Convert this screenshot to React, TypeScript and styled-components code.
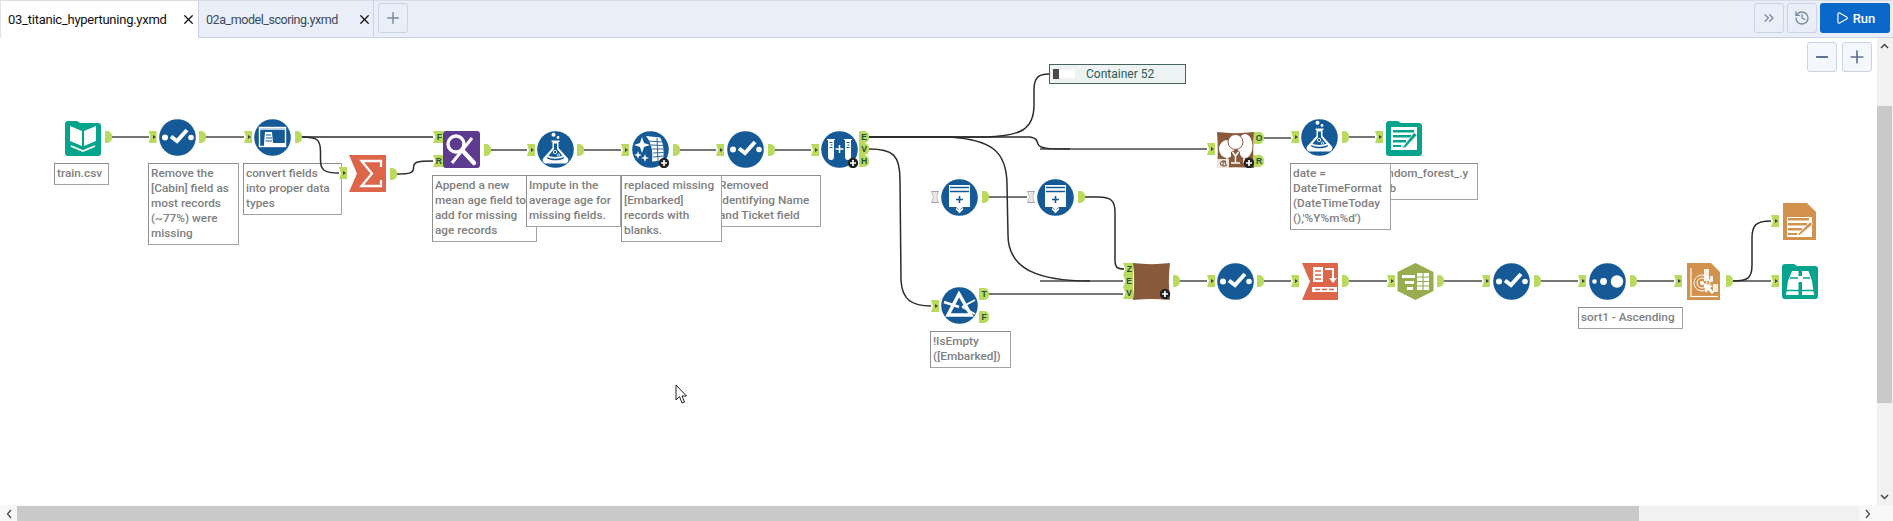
import React from "react";
import styled, { createGlobalStyle } from "styled-components";
import { ChevronsRight, History, Minus, Play, Plus, X } from "lucide-react";

const TOP = 38;
const BLUE = "#155a96";
const TEAL = "#06a38d";
const RED = "#dc654a";
const ORANGE = "#d3914e";
const BROWN = "#8a5a3d";

const Global = createGlobalStyle`
  html, body { margin: 0; padding: 0; background: #fff; overflow: hidden; }
  * { box-sizing: border-box; }
`;

const Page = styled.div`
  width: 1893px;
  height: 521px;
  display: grid;
  grid-template-rows: 38px 1fr 16px;
  grid-template-columns: 1fr 16px;
  font-family: Roboto, "Liberation Sans", sans-serif;
`;

const TabBar = styled.div`
  grid-column: 1 / 3;
  display: flex;
  align-items: stretch;
  background: #e9eef8;
  border-top: 1px solid #d9dde3;
  border-bottom: 1px solid #c9d3e5;
`;

const Tab = styled.div<{ $active?: boolean; $w: number }>`
  width: ${(p) => p.$w}px;
  display: flex;
  align-items: center;
  justify-content: space-between;
  padding: 0 ${(p) => (p.$active ? "2px" : "1px")} 0 7px;
  font-size: ${(p) => (p.$active ? "13px" : "12.5px")};
  letter-spacing: ${(p) => (p.$active ? "-0.25px" : "-0.45px")};
  margin-bottom: ${(p) => (p.$active ? "-1px" : "0")};
  color: ${(p) => (p.$active ? "#111" : "#3a4a60")};
  background: ${(p) => (p.$active ? "#fff" : "#e9eef8")};
  border-left: ${(p) => (p.$active ? "1px solid #dfe3e8" : "none")};
  border-right: 1px solid #c9d3e5;
`;

const Close = styled(X)`
  color: #111;
  flex: none;
`;

const IconButton = styled.div<{ $ml?: number }>`
  width: 30px;
  height: 30px;
  margin-left: ${(p) => p.$ml ?? 3}px;
  margin-top: 2px;
  display: flex;
  align-items: center;
  justify-content: center;
  color: #7b8aa0;
  border: 1px solid #c9d3e5;
  border-radius: 3px;
  background: #e9eef8;
`;

const Spacer = styled.div`
  flex: 1;
`;

const RunButton = styled.div`
  width: 70px;
  height: 30px;
  margin: 2px 3px 0 3px;
  border-radius: 3px;
  display: flex;
  align-items: center;
  justify-content: center;
  gap: 4px;
  color: #fff;
  font-size: 13px;
  font-weight: 500;
  background: #0b68cb;
`;

const Canvas = styled.div`
  position: relative;
  overflow: hidden;
  background: #fff;
`;

const ZoomBar = styled.div`
  position: absolute;
  top: 4px;
  right: 5px;
  display: flex;
  gap: 5px;
  z-index: 5;
`;

const ZoomButton = styled.div`
  width: 30px;
  height: 30px;
  display: flex;
  align-items: center;
  justify-content: center;
  color: #5d7190;
  background: #f4f7fc;
  border: 1px solid #c9d3e5;
  border-radius: 3px;
`;

const VScroll = styled.div`
  display: flex;
  flex-direction: column;
  background: #f1f1f1;
  padding: 0 1px 0 0;
`;

const ScrollArrow = styled.div`
  height: 16px;
  display: flex;
  align-items: center;
  justify-content: center;
  color: #505050;
  flex: none;
`;

const VThumbGap = styled.div`
  height: 52px;
  flex: none;
`;

const VThumb = styled.div`
  height: 297px;
  background: #c9c9c9;
  flex: none;
`;

const HScroll = styled.div`
  grid-column: 1 / 3;
  display: flex;
  background: #f1f1f1;
  border-top: 1px solid #f8f8f8;
`;

const HArrow = styled.div`
  width: 17px;
  display: flex;
  align-items: center;
  justify-content: center;
  color: #505050;
  flex: none;
  background: #f8f8f8;
`;

const HThumb = styled.div`
  width: 1622px;
  background: #c9c9c9;
  flex: none;
`;

const HFill = styled.div`
  flex: 1;
`;

const Note = styled.div<{ $x: number; $y: number; $w: number; $h: number }>`
  position: absolute;
  left: ${(p) => p.$x}px;
  top: ${(p) => p.$y - TOP}px;
  width: ${(p) => p.$w}px;
  height: ${(p) => p.$h}px;
  padding: 2px 0 0 2px;
  overflow: hidden;
  white-space: nowrap;
  background: #fff;
  border: 1px solid #8e8e8e;
  border-right-color: #a2a2a2;
  border-bottom-color: #a2a2a2;
  color: #808080;
  font-family: Roboto, "Liberation Sans", sans-serif;
  font-size: 11.8px;
  font-weight: 500;
  line-height: 15px;
`;

const WireLayer = styled.svg`
  position: absolute;
  left: 0;
  top: 0;
  pointer-events: none;
`;

const Tool = styled.svg<{ $x: number; $y: number; $w?: number }>`
  position: absolute;
  left: ${(p) => p.$x}px;
  top: ${(p) => p.$y - TOP}px;
  width: ${(p) => p.$w ?? 37}px;
  height: 37px;
`;

const InAnchor = styled.div<{ $x: number; $y: number; $label?: string; $off?: boolean }>`
  position: absolute;
  left: ${(p) => p.$x}px;
  top: ${(p) => p.$y - TOP - 6}px;
  width: ${(p) => (p.$label ? 10 : 8)}px;
  height: 12px;
  background: ${(p) => (p.$off ? "#a5a5a5" : "#b9da5e")};
  clip-path: ${(p) =>
    p.$off
      ? "polygon(0 0, 100% 0, 75% 50%, 100% 100%, 0 100%, 25% 50%)"
      : "polygon(0 0, 100% 0, 100% 100%, 0 100%, 25% 50%)"};
  display: flex;
  align-items: center;
  justify-content: flex-end;
  padding-right: 1px;
  font: 700 8.5px/12px "Liberation Sans", sans-serif;
  color: #23513f;
  &::before {
    content: "";
    display: ${(p) => (p.$off ? "block" : "none")};
    position: absolute;
    inset: 1px;
    background: #e6e6e6;
    clip-path: polygon(0 0, 100% 0, 75% 50%, 100% 100%, 0 100%, 25% 50%);
  }
  &::after {
    content: "";
    display: ${(p) => (p.$label || p.$off ? "none" : "block")};
    border-left: 3px solid #444;
    border-top: 2px solid transparent;
    border-bottom: 2px solid transparent;
  }
`;

const OutAnchor = styled.div<{ $x: number; $y: number; $label?: string }>`
  position: absolute;
  left: ${(p) => p.$x}px;
  top: ${(p) => p.$y - TOP - 6}px;
  width: ${(p) => (p.$label ? 10 : 7)}px;
  height: 12px;
  background: #b9da5e;
  border-radius: 0 5px 5px 0;
  text-align: center;
  font: 700 8.5px/12px "Liberation Sans", sans-serif;
  color: #23513f;
`;

const ContainerBox = styled.div`
  position: absolute;
  left: 1049px;
  top: ${64 - TOP}px;
  width: 137px;
  height: 20px;
  display: flex;
  align-items: center;
  padding-left: 3px;
  background: #edf3f3;
  border: 1px solid #45645f;
  color: #2f5a55;
  font-size: 12px;
`;

const ContainerGrip = styled.div`
  width: 6px;
  height: 10px;
  background: #4a4a4a;
  flex: none;
`;

const ContainerTrack = styled.div`
  width: 16px;
  height: 8px;
  margin-right: 11px;
  background: #fff;
  flex: none;
`;

const Pointer = styled.svg`
  position: absolute;
  left: 675px;
  top: ${384 - TOP}px;
  width: 13px;
  height: 20px;
`;

const Circle = () => <circle cx="18.5" cy="18.5" r="18.3" fill={BLUE} />;

const Badge = ({ cx, cy }: { cx: number; cy: number }) => (
  <g>
    <circle cx={cx} cy={cy} r="5.2" fill="#222" />
    <path d={`M${cx - 3} ${cy}h6M${cx} ${cy - 3}v6`} stroke="#fff" strokeWidth="1.7" />
  </g>
);

const Folder = () => (
  <path
    d="M0 4a3 3 0 0 1 3-3h9l3 2h18a3 3 0 0 1 3 3v27a3 3 0 0 1-3 3H3a3 3 0 0 1-3-3z"
    fill={TEAL}
  />
);

const Icons: Record<string, React.ReactNode> = {
  input: (
    <>
      <Folder />
      <path d="M5 6l12 5v15L5 21zM19 11l12-5v15l-12 5z" fill="#fff" />
      <path d="M6 26l12 5 12-5" fill="none" stroke="#fff" strokeWidth="1.8" />
    </>
  ),
  select: (
    <>
      <Circle />
      <circle cx="6" cy="18.5" r="3" fill="#fff" />
      <path d="M12 17.5l6 4.5 10-11" fill="none" stroke="#fff" strokeWidth="4" />
      <circle cx="32" cy="18.5" r="2.8" fill="#fff" />
    </>
  ),
  autofield: (
    <>
      <Circle />
      <rect x="5.5" y="8.5" width="26" height="19" fill="none" stroke="#fff" strokeWidth="1.4" />
      <path d="M6 10h25" stroke="#fff" strokeWidth="1.4" />
      <path d="M10 24h21v4H10z" fill="#fff" />
      <path d="M11 13h7l1 11h-9z" fill="#fff" />
      <path d="M12 16h5M12 19h6M11.5 22h6.5" stroke={BLUE} strokeWidth="1" />
    </>
  ),
  summarize: (
    <>
      <path d="M0 0H37V37H0L8 18.5z" fill={RED} />
      <path d="M32 12V6H12.5L23 18.5 12.5 31H32V25" fill="none" stroke="#fff" strokeWidth="2.3" />
    </>
  ),
  append: (
    <>
      <rect width="37" height="37" rx="3" fill="#5d3c8f" />
      <circle cx="13" cy="13" r="8" fill="none" stroke="#fff" strokeWidth="3.4" />
      <path d="M19 19l12 13" stroke="#fff" strokeWidth="4.4" strokeLinecap="round" />
      <path d="M29 7L9 32" stroke="#fff" strokeWidth="3" />
    </>
  ),
  flask: (
    <>
      <Circle />
      <circle cx="16.5" cy="3.8" r="2" fill="#fff" />
      <circle cx="21" cy="6.5" r="1.4" fill="#fff" />
      <path d="M14.5 9.5h8v1.5h-1v6L31 27.5c1.2 2.5-.6 5-3 5H9c-2.4 0-4.2-2.5-3-5L15.5 17v-6h-1z" fill="#fff" />
      <path d="M17 12.5h3V18l7.3 9c-2 1.6-5 2.3-8.8 2.3s-6.8-.7-8.8-2.3L17 18z" fill={BLUE} />
      <circle cx="18" cy="21" r="1.7" fill="none" stroke="#fff" strokeWidth=".9" />
      <circle cx="21.5" cy="24" r="1.2" fill="none" stroke="#fff" strokeWidth=".8" />
      <path d="M10 25c4 2.5 12 2.5 17 0" fill="none" stroke="#fff" strokeWidth="1.6" />
    </>
  ),
  multi: (
    <>
      <Circle />
      <path d="M10 6l2 6 6 2-6 2-2 6-2-6-6-2 6-2z" fill="#fff" />
      <path d="M6 20l1 3 3 1-3 1-1 3-1-3-3-1 3-1zM13 23l1 3 3 1-3 1-1 3-1-3-3-1 3-1z" fill="#fff" />
      <path d="M14 5l14 1.500c3 4 4.500 13 3 23l-11 1c1-9 0-18-6-25.500z" fill="#fff" />
      <path d="M16 10l14 1M19 14l12 .5M20 18l11.500 0M21 22l10.500-.5M21 26l10-1M25 7l1 23" stroke={BLUE} strokeWidth=".9" />
    </>
  ),
  split: (
    <>
      <Circle />
      <path d="M6 8h8v1h-1v17a3 3 0 0 1-6 0V9H6zM23 8h8v1h-1v17a3 3 0 0 1-6 0V9h-1z" fill="#fff" />
      <path d="M8.500 11.500h3M9.500 14h2M8.500 16.500h3M25.500 11.500h3M26.500 14h2M25.500 16.500h3" stroke={BLUE} strokeWidth="1" />
      <path d="M18.500 14v8M14.500 18h8" stroke="#fff" strokeWidth="1.500" />
    </>
  ),
  forest: (
    <>
      <path d="M0 1c12 1.500 25 1.500 37 0-1 12-1 24 0 36-12-1-25-1-37 0 1-12 1-24 0-36z" fill={BROWN} />
      <ellipse cx="10" cy="18" rx="8" ry="9" fill="#fff" />
      <ellipse cx="28" cy="15" rx="7.500" ry="12" fill="#fff" />
      <ellipse cx="18.500" cy="11" rx="7.500" ry="7.500" fill="#fff" stroke={BROWN} strokeWidth="1" />
      <path d="M14 21c2-1 3.500-1.500 4.500-3.500 1 2 3 2.500 4.500 3.500l.5 9H14z" fill={BROWN} />
      <path d="M18.500 31v-6l-3-4M18.500 25l3-4" fill="none" stroke="#fff" strokeWidth="1.500" />
      <path d="M10 32v-6M14 32h9M27 32v-6" stroke="#fff" strokeWidth="1.500" />
      <path d="M0 28h12v9H0z" fill="#efe6e0" />
      <path d="M9 30.500a3.500 2.500 0 1 0 0 4M6 31v4M6 31h2l1.500 4" fill="none" stroke="#7d6050" strokeWidth="1.100" />
    </>
  ),
  formula: (
    <>
      <Circle />
      <path d="M8 6h21v22l-7 0-3.500 3-3.500-3H8z" fill="#fff" />
      <path d="M9 8.500h19M9 12.500h19" stroke={BLUE} strokeWidth="1.500" />
      <path d="M18.500 17v7M15 20.500h7" stroke={BLUE} strokeWidth="1.600" />
      <path d="M18.500 26v6M15 29.500l3.500 3.500 3.500-3.500" fill="none" stroke="#fff" strokeWidth="1.600" />
    </>
  ),
  filter: (
    <>
      <Circle />
      <path d="M18 7L7 28h23z" fill="none" stroke="#fff" strokeWidth="3.400" />
      <path d="M3 15l15 5" stroke="#fff" strokeWidth="2.400" />
      <path d="M21 20l13-7M21 20l13 7" stroke="#fff" strokeWidth="1.800" />
    </>
  ),
  union: (
    <>
      <path d="M0 0C12 1.500 25 1.500 37 0 35.500 12 35.500 25 37 37 25 35.500 12 35.500 0 37 1.500 25 1.500 12 0 0z" fill={BROWN} />
    </>
  ),
  red: (
    <>
      <path d="M0 0H36V37H0L8 18.500z" fill={RED} />
      <path d="M11 4h10v15H11z" fill="#fff" />
      <path d="M13 8h6M13 12h6M13 16h6" stroke={RED} strokeWidth="1.600" />
      <path d="M23 6h8v10" fill="none" stroke="#fff" strokeWidth="2" />
      <path d="M27 15h8l-4 5z" fill="#fff" />
      <path d="M10 24h25v5H10z" fill="#fff" />
      <path d="M13 26.500h5M20 26.500h5M27 26.500h5" stroke={RED} strokeWidth="1.600" />
    </>
  ),
  hex: (
    <>
      <path d="M18.500 0L36.500 9v19L18.500 37 .5 28V9z" fill="#98ac50" />
      <path d="M5 12h13v3H5zM8 18h9v3H8zM10 24h6v3h-6z" fill="#fff" />
      <path d="M20 10h12v17H20z" fill="#fff" />
      <path d="M20 14h12M20 18.500h12M20 23h12M26 10v17" stroke="#98ac50" strokeWidth="1.200" />
    </>
  ),
  sort: (
    <>
      <Circle />
      <circle cx="5.500" cy="18.500" r="2.300" fill="#fff" />
      <circle cx="14.500" cy="18.500" r="3.400" fill="#fff" />
      <circle cx="28" cy="18.500" r="6.200" fill="#fff" />
    </>
  ),
  report: (
    <>
      <path d="M0 0H24L33 9V37H0z" fill={ORANGE} />
      <path d="M4 33.500h27" stroke="#fff" strokeWidth="1.200" />
      <path d="M4 5v29" stroke="#fff" strokeWidth="1.200" />
      <path d="M17 6h5v12h-5zM23 13h3v6h-3zM26 21h5v8h-5z" fill="#fff" opacity=".85" />
      <circle cx="15" cy="20" r="8" fill="none" stroke="#fff" strokeWidth="1" />
      <circle cx="15" cy="20" r="5" fill="none" stroke="#fff" strokeWidth="1" />
      <circle cx="15" cy="20" r="2" fill="#fff" />
      <path d="M16 20l3 10 2-3 4 4 2-2-4-4 3-2z" fill="#fff" />
    </>
  ),
  note: (
    <>
      <path d="M0 0H24L33 9V37H0z" fill={ORANGE} />
      <path d="M4 14h25v20H4z" fill="#fff" />
      <path d="M5 15h21v2.500H5zM5 20h19v2.500H5zM5 25h14v2.500H5zM5 30h9v2H5z" fill={ORANGE} />
      <path d="M14 32l3 0 13-11-3-2z" fill={ORANGE} stroke="#fff" strokeWidth=".6" />
    </>
  ),
  output: (
    <>
      <Folder />
      <path d="M5 7h26v23H5z" fill="#fff" />
      <path d="M7 10h21v2.500H7zM7 15h18v2.500H7zM7 20h13v2.500H7zM7 25h8v2H7z" fill={TEAL} />
      <path d="M16 28l3.500-.5L31 15l-3-2.500z" fill={TEAL} stroke="#fff" strokeWidth=".6" />
    </>
  ),
  browse: (
    <>
      <Folder />
      <path d="M10 8h6.500v24H4l2-14zM20 8h6.500l3.500 10 2 14H20z" fill="#fff" />
      <path d="M15 13h6v6h-6z" fill="#fff" />
      <path d="M4 27.500h13M20 27.500h12M8 15h8M21 15h7" stroke={TEAL} strokeWidth="1.300" />
    </>
  ),
};

const tools: { k: string; x: number; y: number; w?: number; badge?: [number, number] }[] = [
  { k: "input", x: 65, y: 120 },
  { k: "select", x: 159, y: 119 },
  { k: "autofield", x: 254, y: 119 },
  { k: "summarize", x: 349, y: 155 },
  { k: "append", x: 443, y: 131 },
  { k: "flask", x: 536.5, y: 131 },
  { k: "multi", x: 632, y: 131, w: 40, badge: [32, 32] },
  { k: "select", x: 726.5, y: 131 },
  { k: "split", x: 821, y: 131, w: 40, badge: [32, 32] },
  { k: "forest", x: 1217, y: 131, w: 43, badge: [32, 32] },
  { k: "flask", x: 1301, y: 119 },
  { k: "output", x: 1386, y: 120 },
  { k: "formula", x: 941, y: 179 },
  { k: "formula", x: 1037, y: 179 },
  { k: "filter", x: 941, y: 287 },
  { k: "union", x: 1133, y: 263, w: 43, badge: [32, 31] },
  { k: "select", x: 1217, y: 263 },
  { k: "red", x: 1302, y: 263 },
  { k: "hex", x: 1397, y: 263 },
  { k: "select", x: 1493, y: 263 },
  { k: "sort", x: 1589, y: 263 },
  { k: "report", x: 1687, y: 263 },
  { k: "note", x: 1783, y: 203 },
  { k: "browse", x: 1782, y: 263 },
];

const inputs: { x: number; y: number; label?: string; off?: boolean }[] = [
  { x: 148.5, y: 137 }, { x: 244, y: 137 }, { x: 339, y: 173 },
  { x: 433, y: 137, label: "F" }, { x: 433, y: 161, label: "R" },
  { x: 527, y: 150 }, { x: 621, y: 150 }, { x: 716, y: 150 }, { x: 811, y: 150 },
  { x: 1207, y: 149 }, { x: 1291, y: 137 }, { x: 1375, y: 137 },
  { x: 931, y: 197, off: true }, { x: 1027, y: 197, off: true }, { x: 931, y: 306 },
  { x: 1123, y: 269, label: "Z" }, { x: 1123, y: 281, label: "E" }, { x: 1123, y: 293, label: "V" },
  { x: 1207, y: 281 }, { x: 1291, y: 281 }, { x: 1387, y: 281 }, { x: 1482, y: 281 },
  { x: 1578, y: 281 }, { x: 1674, y: 281 }, { x: 1771, y: 221 }, { x: 1771, y: 281 },
];

const outputs: { x: number; y: number; label?: string }[] = [
  { x: 105, y: 137 }, { x: 199, y: 137 }, { x: 295, y: 137 }, { x: 390, y: 174 },
  { x: 484, y: 150 }, { x: 577, y: 150 }, { x: 673, y: 150 }, { x: 768, y: 150 },
  { x: 859, y: 137, label: "E" }, { x: 859, y: 149, label: "V" }, { x: 859, y: 161, label: "H" },
  { x: 1254, y: 138, label: "O" }, { x: 1254, y: 161, label: "R" },
  { x: 1342, y: 137 }, { x: 982, y: 197 }, { x: 1078, y: 197 },
  { x: 979, y: 294, label: "T" }, { x: 979, y: 317, label: "F" },
  { x: 1173, y: 281 }, { x: 1257, y: 281 }, { x: 1342, y: 281 }, { x: 1437, y: 281 },
  { x: 1534, y: 281 }, { x: 1630, y: 281 }, { x: 1726, y: 281 },
];

const notes: { x: number; y: number; w: number; h: number; t: string[] }[] = [
  { x: 54, y: 163, w: 55, h: 22, t: ["train.csv"] },
  { x: 148, y: 163, w: 91, h: 82, t: ["Remove the", "[Cabin] field as", "most records", "(~77%) were", "missing"] },
  { x: 243, y: 163, w: 99, h: 52, t: ["convert fields", "into proper data", "types"] },
  { x: 432, y: 175, w: 105, h: 67, t: ["Append a new", "mean age field to", "add for missing", "age records"] },
  { x: 526, y: 175, w: 95, h: 52, t: ["Impute in the", "average age for", "missing fields."] },
  { x: 716, y: 175, w: 105, h: 52, t: ["Removed", "Identifying Name", "and Ticket field"] },
  { x: 621, y: 175, w: 101, h: 67, t: ["replaced missing", "[Embarked]", "records with", "blanks."] },
  { x: 1374, y: 163, w: 104, h: 37, t: ["random_forest_.y", "xdb"] },
  { x: 1290, y: 163, w: 101, h: 67, t: ["date =", "DateTimeFormat", "(DateTimeToday", "(),'%Y%m%d')"] },
  { x: 930, y: 331, w: 81, h: 37, t: ["!IsEmpty", "([Embarked])"] },
  { x: 1578, y: 307, w: 105, h: 22, t: ["sort1 - Ascending"] },
];

const gray = [
  "M112 137H149", "M206 137H244", "M491 150H527", "M584 150H621", "M680 150H716", "M775 150H811",
  "M1040 149H1207", "M989 197H1027", "M989 294H1123", "M1040 281H1123",
  "M1180 281H1207", "M1264 281H1291", "M1349 281H1387", "M1444 281H1482",
  "M1541 281H1578", "M1637 281H1674", "M1733 281H1771", "M1349 137H1375", "M1264 138H1291",
];

const dark = [
  "M302 137H433",
  "M302 137C318 137 320.500 140 320.500 152L320.500 160C320.500 170 324 173 339 173",
  "M397 174C410 174 413.500 173 413.500 168C413.500 162 416 161 433 161",
  "M869 137H985C1020 136 1034 130 1034 105L1034 90C1034 78 1038 74 1049 74",
  "M869 137H1030C1036 138 1037 140 1038 144C1040 149 1050 149 1070 149",
  "M869 137H950C990 140 1007 150 1007 185L1008 235C1008 270 1040 281 1090 281",
  "M869 149C893 149 900 155 900 180L901 280C902 300 912 306 931 306",
  "M1085 197H1098C1110 197 1115 200 1115 212L1115 260C1115 267 1117 269 1124 269",
  "M1733 281C1748 281 1752 278 1752 265L1752 238C1752 225 1756 221 1771 221",
];

export default function App() {
  return (
    <Page>
      <Global />
      <TabBar>
        <Tab $active $w={199}>
          03_titanic_hypertuning.yxmd
          <Close size={15} strokeWidth={2} />
        </Tab>
        <Tab $w={175}>
          02a_model_scoring.yxmd
          <Close size={15} strokeWidth={2} />
        </Tab>
        <IconButton $ml={4}>
          <Plus size={18} />
        </IconButton>
        <Spacer />
        <IconButton>
          <ChevronsRight size={16} />
        </IconButton>
        <IconButton>
          <History size={16} />
        </IconButton>
        <RunButton>
          <Play size={14} />
          Run
        </RunButton>
      </TabBar>
      <Canvas>
        {notes.map((n) => (
          <Note key={n.t[0]} $x={n.x} $y={n.y} $w={n.w} $h={n.h}>
            {n.t.map((l) => (
              <div key={l}>{l}</div>
            ))}
          </Note>
        ))}
        <ContainerBox>
          <ContainerGrip />
          <ContainerTrack />
          <span>Container 52</span>
        </ContainerBox>
        <WireLayer width="1877" height="467" viewBox={`0 ${TOP} 1877 467`}>
          {gray.map((d) => (
            <path key={d} d={d} fill="none" stroke="#757575" strokeWidth="2" />
          ))}
          {dark.map((d) => (
            <path key={d} d={d} fill="none" stroke="#2b2b2b" strokeWidth="1.5" />
          ))}
        </WireLayer>
        {tools.map((t, i) => (
          <Tool key={i} $x={t.x} $y={t.y} $w={t.w} viewBox={`0 0 ${t.w ?? 37} 37`}>
            {Icons[t.k]}
            {t.badge && <Badge cx={t.badge[0]} cy={t.badge[1]} />}
          </Tool>
        ))}
        {inputs.map((a, i) => (
          <InAnchor key={i} $x={a.x} $y={a.y} $label={a.label} $off={a.off}>
            {a.label}
          </InAnchor>
        ))}
        {outputs.map((a, i) => (
          <OutAnchor key={i} $x={a.x} $y={a.y} $label={a.label}>
            {a.label}
          </OutAnchor>
        ))}
        <Pointer viewBox="0 0 13 20">
          <path d="M1 1V16L4.500 12.500 7 19 9.500 18 7 12H11.500z" fill="#fff" stroke="#222" strokeWidth="1" />
        </Pointer>
        <ZoomBar>
          <ZoomButton>
            <Minus size={18} strokeWidth={2.4} />
          </ZoomButton>
          <ZoomButton>
            <Plus size={20} />
          </ZoomButton>
        </ZoomBar>
      </Canvas>
      <VScroll>
        <ScrollArrow>
          <svg width="9" height="6" viewBox="0 0 9 6">
            <path d="M1 5l3.500-3.500L8 5" fill="none" stroke="#444" strokeWidth="1.500" />
          </svg>
        </ScrollArrow>
        <VThumbGap />
        <VThumb />
        <Spacer />
        <ScrollArrow>
          <svg width="9" height="6" viewBox="0 0 9 6">
            <path d="M1 1l3.500 3.500L8 1" fill="none" stroke="#444" strokeWidth="1.500" />
          </svg>
        </ScrollArrow>
      </VScroll>
      <HScroll>
        <HArrow>
          <svg width="6" height="10" viewBox="0 0 6 10">
            <path d="M5 1L1.500 5 5 9" fill="none" stroke="#444" strokeWidth="1.200" />
          </svg>
        </HArrow>
        <HThumb />
        <HFill />
        <HArrow>
          <svg width="6" height="10" viewBox="0 0 6 10">
            <path d="M1 1l3.500 4L1 9" fill="none" stroke="#444" strokeWidth="1.200" />
          </svg>
        </HArrow>
        <HArrow />
      </HScroll>
    </Page>
  );
}
